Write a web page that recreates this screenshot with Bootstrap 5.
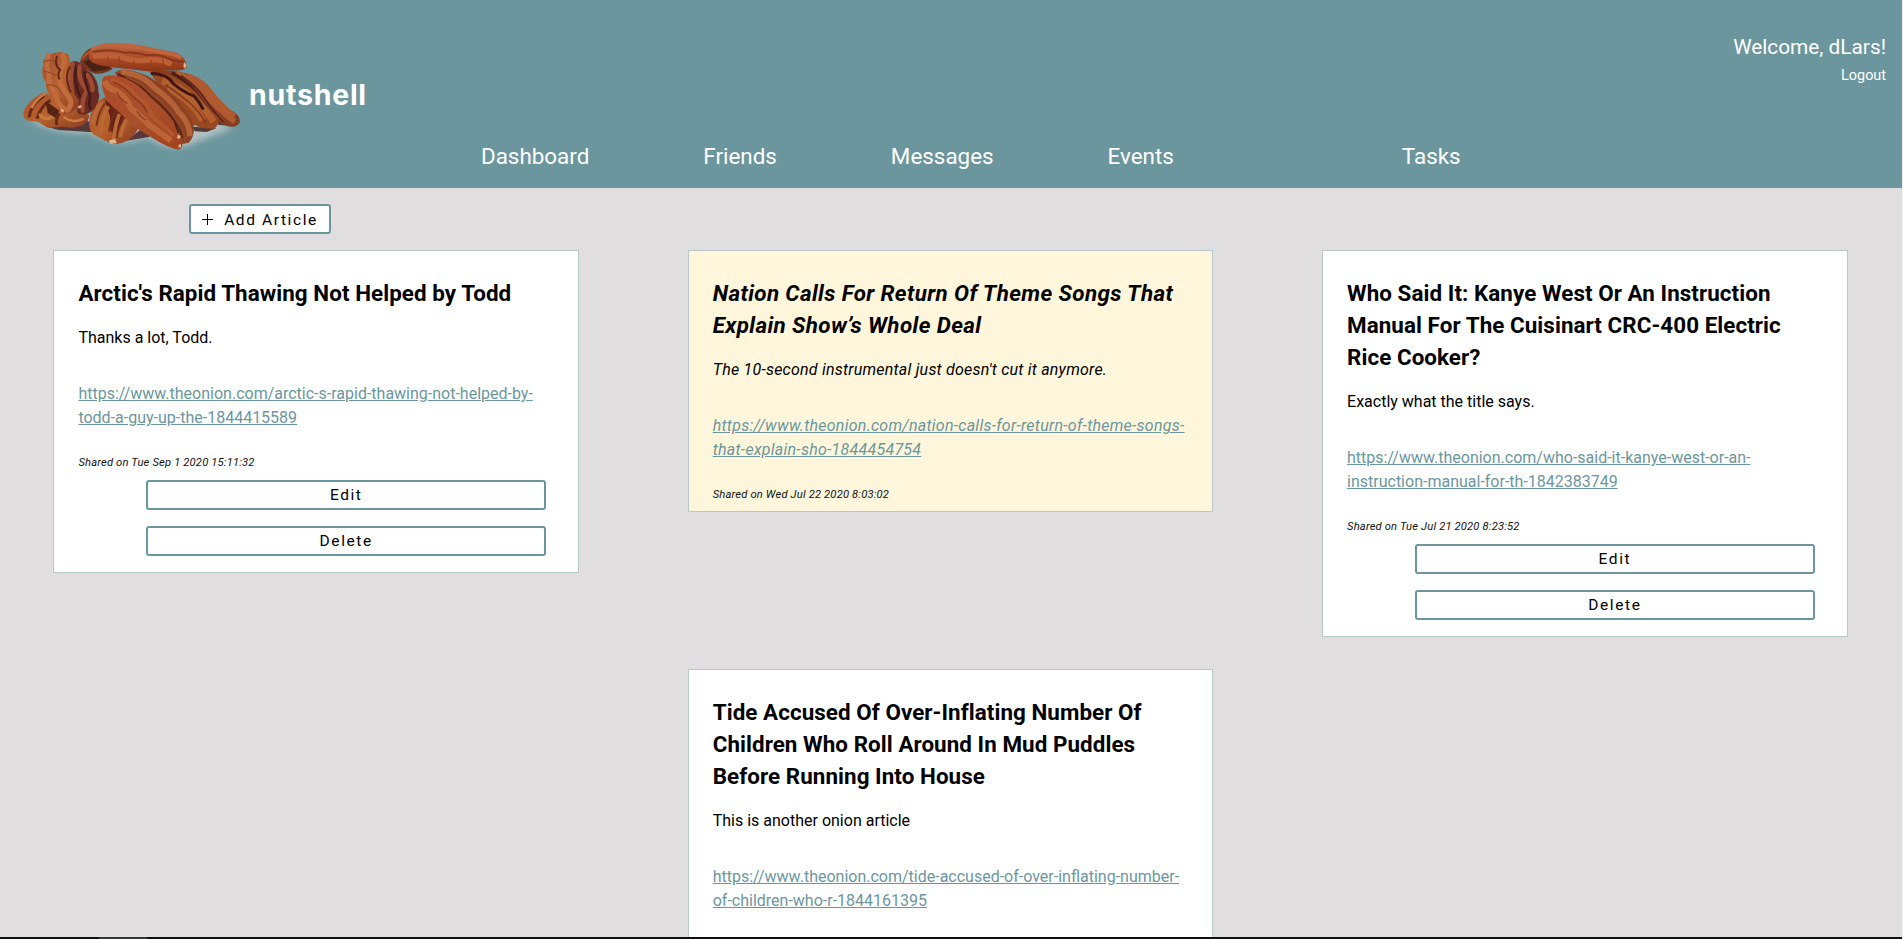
<!DOCTYPE html>
<html lang="en">
<head>
<meta charset="utf-8">
<meta name="viewport" content="width=device-width, initial-scale=1">
<title>Nutshell</title>
<link href="https://cdn.jsdelivr.net/npm/bootstrap@5.3.0/dist/css/bootstrap.min.css" rel="stylesheet">
<style>
body{font-family:Roboto,"Liberation Sans",sans-serif;background:#f2f1f1;color:#000;font-size:16px;line-height:24px}
.app{height:100vh;padding-right:1px}
.masthead{height:188px;background:#6c969d;color:#fff}
.brand{width:424px;padding:36px 0 0 20px}
.brand-name{font:700 28.5px/32px Inter,sans-serif;margin:43px 0 0 6px;letter-spacing:.75px}
.main-nav .nav-link{color:#fff;font-size:22.4px;line-height:32px;padding:0 57px}
.main-nav{padding-bottom:16px}
.user{padding:31px 16px 0 0}
.user a{color:#fff;font-size:14.4px;line-height:26px;display:block}
.hello{font-size:20.8px;line-height:32px}
.feed{background:#e0dedf;min-height:0}
.article-row{margin-right:-1px}
.news-btn{background:#fff;border:2px solid #6c969d;border-radius:3px;height:30px;padding:1px 11px 0;font-family:Roboto,sans-serif;font-size:15.5px;font-weight:400;letter-spacing:1.6px;line-height:24px;color:#000}
.add{margin:16px 0 0 189px;width:142px;padding:1px 0 0;white-space:nowrap}
.add svg{margin-right:10px}
.article-card{margin:16px 55.3px 16px 53.4px;padding:26.4px 24px 0;border:1px solid #b8c8cb;border-radius:0;background:#fff}
.article-card.shared{background:#fff6dc;font-style:italic;padding-bottom:4px}
.article-card h3{font-size:22.4px;line-height:32px;font-weight:700;letter-spacing:.06px;margin:0 0 17px}
.article-card p{margin:0 0 32px}
.article-card a{color:#6c969d;margin-bottom:24.6px;display:block}
.article-card small{font-size:11.2px;line-height:16px;font-style:italic;letter-spacing:.17px;margin-bottom:9px;color:#111}
.shared h3{letter-spacing:.38px}
.shared p{letter-spacing:.22px}
.shared a{letter-spacing:.25px}
.actions{margin:0 8px 16px 68px;gap:16px}
.edge{height:2px;background:#120d12;flex:none}
.edge span{display:block;width:48px;height:2px;margin-left:99px;background:#39363a}
</style>
</head>
<body>
<div class="app d-flex flex-column overflow-hidden">
<header class="masthead d-flex flex-shrink-0">
  <div class="brand d-flex align-items-start">
    <svg width="223" height="117" viewBox="60 46 669 351" aria-label="Pecans">
      <defs>
        <filter id="soft" x="-20%" y="-60%" width="140%" height="220%"><feGaussianBlur stdDeviation="9"/></filter>
        <filter id="fine"><feGaussianBlur stdDeviation="2.2"/></filter>
        <linearGradient id="a" x1="0" y1="0" x2="1" y2="1"><stop offset="0" stop-color="#a4512d"/><stop offset=".5" stop-color="#b9622e"/><stop offset="1" stop-color="#8b3a20"/></linearGradient>
        <linearGradient id="b" x1="0" y1="0" x2="0" y2="1"><stop offset="0" stop-color="#c16a40"/><stop offset=".5" stop-color="#ae4b27"/><stop offset="1" stop-color="#8b3517"/></linearGradient>
        <linearGradient id="c" x1="0" y1="0" x2="1" y2="1"><stop offset="0" stop-color="#ad4a28"/><stop offset=".55" stop-color="#a9502a"/><stop offset="1" stop-color="#a3401f"/></linearGradient>
      </defs>
      <path d="M85 300 Q190 345 270 335 Q350 385 440 350 Q500 390 560 375 L700 322 L640 300 L250 285Z" fill="#c9d0d2" opacity=".75" filter="url(#soft)"/>
      <g filter="url(#fine)">
      <path d="M140 318 L265 300 L280 335 L175 328Z M380 360 L430 320 L450 348Z M575 318 L650 322 L620 334 L585 332Z M640 290 L700 316 L655 312Z" fill="#573737"/>
      <path d="M70 282 C70 260 96 233 132 215 L200 250 L268 284 C267 310 238 322 208 321 C185 315 164 322 148 321 C128 319 119 300 106 302 C86 302 69 296 70 282Z" fill="url(#a)"/>
      <path d="M132 225 Q92 251 87 290 M151 239 Q122 257 111 294 M178 278 Q165 298 171 314" stroke="#6c2918" stroke-width="9" fill="none"/>
      <path d="M137 217 Q104 239 95 263 M117 280 Q140 306 163 284 M190 289 Q223 310 251 294" stroke="#c77a43" stroke-width="8" fill="none"/>
      <path d="M137 241 L178 270 L166 291 L143 277Z" fill="#542014"/>
      <path d="M270 288 C277 257 297 233 319 228 L414 325 C401 352 371 370 345 370 C326 367 306 354 288 345 C269 336 263 311 270 288Z" fill="url(#a)"/>
      <path d="M313 235 L367 277 Q379 299 358 320 L347 344 L331 332 L330 286Z" fill="#672416"/>
      <path d="M305 244 Q281 276 279 310 M325 257 Q303 295 303 334 M358 280 Q346 312 340 358 M382 289 Q365 324 361 350" stroke="#b96a34" stroke-width="11" fill="none"/>
      <path d="M315 248 Q293 280 290 315 M347 270 Q329 300 327 333 M375 289 Q353 320 350 352" stroke="#77301a" stroke-width="5" fill="none"/>
      <path d="M240 124 Q246 94 277 80 L338 145 Q316 160 287 159 Q251 150 240 124Z" fill="#76341f"/>
      <path d="M251 125 Q270 109 289 124 L331 142 Q306 155 278 151Z" fill="#482119"/>
      <path d="M244 122 Q248 94 284 83 L315 80 L303 97 L264 101Z" fill="#ad552d"/>
      <path d="M207 129 Q226 112 244 130 Q260 151 275 158 Q296 184 295 212 Q304 230 283 265 Q260 288 235 280 Q219 246 215 191Z" fill="#6a2b20"/>
      <path d="M218 128 Q203 187 228 262 M239 137 Q231 174 261 209 Q244 237 248 270 M262 163 Q278 185 278 208" stroke="#9c4c31" stroke-width="13" fill="none" stroke-linecap="round"/>
      <path d="M228 137 Q220 187 241 230 M254 153 Q252 182 271 228 Q263 253 273 267" stroke="#421b1c" stroke-width="7" fill="none"/>
      <path d="M148 102 C159 94 187 91 204 100 C216 116 207 139 211 153 C200 174 208 204 230 230 C249 253 220 276 201 280 C185 281 175 270 169 247 C148 228 135 204 138 184 C125 172 124 148 131 132 C127 119 137 105 148 102Z" fill="url(#a)"/>
      <path d="M145 105 Q136 139 148 162 Q140 184 166 219 Q171 250 192 264 M189 105 Q199 122 185 143 Q167 181 203 224 Q222 248 202 269" stroke="#c06c3c" stroke-width="15" fill="none" stroke-linecap="round"/>
      <path d="M171 106 Q162 135 180 147 Q171 164 179 176 M211 137 Q190 168 213 215" stroke="#60281d" stroke-width="6" fill="none"/>
      <path d="M132 152 Q151 153 167 165 M139 195 Q168 184 187 219 M133 124 Q151 113 164 124" stroke="#8b412b" stroke-width="3" fill="none"/>
      <path d="M455 153 Q510 144 565 160 Q603 176 630 206 Q657 245 689 267 Q721 280 720 304 Q711 323 684 317 L640 298 L586 229Z" fill="#863c22"/>
      <path d="M528 157 Q575 170 611 212 Q633 246 672 277 Q690 295 705 302 M562 165 Q608 180 631 214 Q658 251 703 287" stroke="#b05a32" stroke-width="16" fill="none"/>
      <path d="M515 156 Q563 181 594 224 L642 294" stroke="#4f1d18" stroke-width="9" fill="none"/>
      <path d="M544 165 Q599 203 625 250 Q644 278 670 304" stroke="#5e2118" stroke-width="5" fill="none"/>
      <path d="M448 155 Q500 152 535 178 Q573 195 600 229 Q625 265 650 286 Q662 309 644 323 Q615 329 578 311 L475 191Z" fill="#984822"/>
      <path d="M486 180 Q550 203 577 231 Q608 255 641 303 M503 203 Q569 233 608 299" stroke="#b4602e" stroke-width="20" fill="none"/>
      <path d="M453 158 Q504 161 520 189 Q552 216 582 226 Q600 245 610 267" stroke="#431817" stroke-width="9" fill="none"/>
      <path d="M497 192 Q543 225 573 250 Q601 278 617 306" stroke="#7d371e" stroke-width="4" fill="none"/>
      <path d="M344 157 Q361 141 399 151 Q442 160 475 188 Q526 222 547 258 Q570 278 581 312 Q586 346 566 366 L535 372 L484 288Z" fill="#8d3f20"/>
      <path d="M362 156 Q424 157 462 201 Q513 236 535 273 Q568 304 570 347" stroke="#b46237" stroke-width="17" fill="none"/>
      <path d="M353 162 Q407 179 441 214 Q490 253 518 292 Q543 318 548 352" stroke="#5b2418" stroke-width="9" fill="none"/>
      <path d="M375 166 Q431 189 457 222 Q507 260 530 299 Q554 333 556 365" stroke="#8f4526" stroke-width="8" fill="none"/>
      <path d="M306 184 C305 165 324 161 354 166 C397 175 433 209 461 241 C503 273 524 307 534 334 C553 355 551 383 536 387 C504 384 460 354 424 332 C393 314 370 282 341 261 C320 240 304 212 306 184Z" fill="url(#c)"/>
      <path d="M313 181 Q323 205 349 211 Q380 233 393 263 Q424 287 444 310 L513 360" stroke="#be6539" stroke-width="18" fill="none"/>
      <path d="M333 178 Q380 191 411 228 Q448 253 455 286 Q488 315 521 344" stroke="#b2562f" stroke-width="12" fill="none"/>
      <path d="M339 183 Q379 201 398 228 Q430 249 441 275 M350 214 Q362 240 382 248 M411 271 Q423 292 439 299" stroke="#88391f" stroke-width="4" fill="none"/>
      <path d="M270 96 C287 69 329 63 365 67 C411 69 456 82 501 90 C540 95 558 109 560 139 C555 153 518 149 494 150 C456 158 419 148 385 145 C344 140 311 138 288 130 C270 124 261 110 270 96Z" fill="url(#b)"/>
      <path d="M273 86 Q324 64 386 77 Q442 83 480 94 Q521 99 544 111" stroke="#bd663f" stroke-width="11" fill="none"/>
      <path d="M278 94 Q328 82 374 96 Q411 94 438 104 Q481 99 517 119 L553 125" stroke="#843820" stroke-width="6" fill="none"/>
      <path d="M278 107 Q323 101 363 109 Q401 124 443 118 Q486 114 514 131" stroke="#bd5e36" stroke-width="16" fill="none"/>
      <path d="M323 107 Q321 119 333 129 M357 106 L357 133 M401 119 L408 144 M455 117 Q448 132 455 147 M487 113 L493 139" stroke="#91401f" stroke-width="3" fill="none"/>
      <path d="M182 263 l10 6 -2 7 -8 -4Z M233 257 l10 -4 2 7 -8 4Z M327 359 l19 -4 4 13 -20 1Z M533 342 l10 4 -6 10 -6 -4Z M535 373 l8 -3 0 9 -7 3Z M552 124 l7 8 -3 12 -6 -6Z" fill="#e1b38a"/>
      <path d="M524 302 Q530 325 536 337" stroke="#482015" stroke-width="5" fill="none"/>
      </g>
    </svg>
    <div class="brand-name">nutshell</div>
  </div>
  <nav class="main-nav nav flex-nowrap align-self-end">
    <a class="nav-link" href="#">Dashboard</a>
    <a class="nav-link" href="#">Friends</a>
    <a class="nav-link" href="#">Messages</a>
    <a class="nav-link" href="#">Events</a>
    <a class="nav-link" href="#" aria-hidden="true"></a>
    <a class="nav-link" href="#">Tasks</a>
  </nav>
  <div class="user ms-auto text-end">
    <div class="hello">Welcome, dLars!</div>
    <a class="text-decoration-none" href="#">Logout</a>
  </div>
</header>
<main class="feed flex-grow-1 overflow-hidden">
  <button class="news-btn add d-flex align-items-center justify-content-center"><svg width="12" height="12" viewBox="0 0 12 12"><path d="M5.5 0v11M0 5.5h11" stroke="#000"/></svg>Add Article</button>
  <div class="row g-0 align-items-start article-row">
    <div class="col-4">
      <article class="card article-card">
        <h3>Arctic's Rapid Thawing Not Helped by Todd</h3>
        <p>Thanks a lot, Todd.</p>
        <a href="#">https://www.theonion.com/arctic-s-rapid-thawing-not-helped-by-todd-a-guy-up-the-1844415589</a>
        <small>Shared on Tue Sep 1 2020 15:11:32</small>
        <div class="actions d-flex flex-column"><button class="news-btn">Edit</button><button class="news-btn">Delete</button></div>
      </article>
    </div>
    <div class="col-4">
      <article class="card article-card shared">
        <h3>Nation Calls For Return Of Theme Songs That Explain Show’s Whole Deal</h3>
        <p>The 10-second instrumental just doesn't cut it anymore.</p>
        <a href="#">https://www.theonion.com/nation-calls-for-return-of-theme-songs-that-explain-sho-1844454754</a>
        <small class="mb-1">Shared on Wed Jul 22 2020 8:03:02</small>
      </article>
    </div>
    <div class="col-4">
      <article class="card article-card">
        <h3>Who Said It: Kanye West Or An Instruction Manual For The Cuisinart CRC-400 Electric Rice Cooker?</h3>
        <p>Exactly what the title says.</p>
        <a href="#">https://www.theonion.com/who-said-it-kanye-west-or-an-instruction-manual-for-th-1842383749</a>
        <small>Shared on Tue Jul 21 2020 8:23:52</small>
        <div class="actions d-flex flex-column"><button class="news-btn">Edit</button><button class="news-btn">Delete</button></div>
      </article>
    </div>
    <div class="col-4 offset-4">
      <article class="card article-card pb-5">
        <h3>Tide Accused Of Over-Inflating Number Of Children Who Roll Around In Mud Puddles Before Running Into House</h3>
        <p>This is another onion article</p>
        <a href="#">https://www.theonion.com/tide-accused-of-over-inflating-number-of-children-who-r-1844161395</a>
      </article>
    </div>
  </div>
</main>
<div class="edge"><span></span></div>
</div>
<script src="https://cdn.jsdelivr.net/npm/bootstrap@5.3.0/dist/js/bootstrap.bundle.min.js"></script>
</body>
</html>
